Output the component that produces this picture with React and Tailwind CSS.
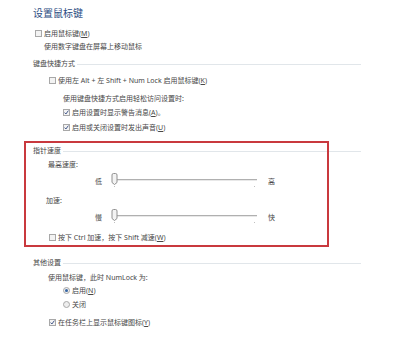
import React from "react";

const font = "font-['Noto_Sans','Noto_Sans_CJK_SC',sans-serif]";

function Box({ checked }) {
  return (
    <span className="relative inline-block w-[7px] h-[7px] border border-[#a8a8a8] bg-[#f3f3f3] shrink-0">
      {checked && (
        <svg className="absolute left-0 top-0" width="5" height="5" viewBox="0 0 5 5">
          <path d="M0.6 2.6 L1.9 4 L4.4 0.6" fill="none" stroke="#44598a" strokeWidth="1" />
        </svg>
      )}
    </span>
  );
}

function Radio({ checked }) {
  return (
    <span className="relative inline-flex items-center justify-center w-[7px] h-[7px] rounded-full border border-[#a8a8a8] bg-[#eeeeee] shrink-0">
      {checked && <span className="w-[3px] h-[3px] rounded-full bg-[#3565a3]" />}
    </span>
  );
}

function Key({ k }) {
  return (
    <>
      (<span className="underline">{k}</span>)
    </>
  );
}

function Section({ label, mt }) {
  return (
    <div className={`flex items-center h-[12px] ml-[33px] w-[328px] ${mt}`}>
      <span className="whitespace-nowrap">{label}</span>
      <span className="flex-1 h-px bg-[#e1e6ea] ml-[2px] mt-[2px]" />
    </div>
  );
}

function Slider({ lo, hi, mt }) {
  return (
    <div className={`flex items-center h-[12px] ${mt}`}>
      <span className="ml-[95px] w-[16px]">{lo}</span>
      <svg width="152" height="16" viewBox="0 0 152 16" className="shrink-0">
        <line x1="6" y1="6.5" x2="146" y2="6.5" stroke="#b0b0b0" strokeWidth="1" />
        <line x1="6" y1="7.5" x2="146" y2="7.5" stroke="#e8e8e8" strokeWidth="1" />
        <rect x="3" y="13" width="1" height="1" fill="#c0c0c0" />
        <rect x="143" y="13" width="1" height="1" fill="#c0c0c0" />
        <path d="M1 2 Q1 0.5 2.5 0.5 L4.5 0.5 Q6 0.5 6 2 L6 9.5 L3.5 11.5 L1 9.5 Z" fill="#f3f3f3" stroke="#909090" strokeWidth="1" />
      </svg>
      <span className="ml-[5px]">{hi}</span>
    </div>
  );
}

export default function App() {
  return (
    <div className={`relative w-[400px] h-[348px] bg-white overflow-hidden text-[7px] leading-none text-[#474747] ${font}`}>
      <div className="flex items-center h-[16px] mt-[5px] ml-[33px] text-[10px] text-[#2c4c82]">设置鼠标键</div>

      <div className="flex items-center h-[12px] mt-[6px] ml-[35px] gap-[2px]">
        <Box /> <span>启用鼠标键<Key k="M" /></span>
      </div>
      <div className="flex items-center h-[12px] mt-[1px] ml-[44px]">使用数字键盘在屏幕上移动鼠标</div>

      <Section label="键盘快捷方式" mt="mt-[5px]" />
      <div className="flex items-center h-[12px] mt-[5px] ml-[49px] gap-[2px]">
        <Box /> <span>使用左 Alt + 左 Shift + Num Lock 启用鼠标键<Key k="K" /></span>
      </div>
      <div className="flex items-center h-[12px] mt-[6px] ml-[63px]">使用键盘快捷方式启用轻松访问设置时:</div>
      <div className="flex items-center h-[12px] mt-[2px] ml-[63px] gap-[2px]">
        <Box checked /> <span>启用设置时显示警告消息<Key k="A" />。</span>
      </div>
      <div className="flex items-center h-[12px] mt-[3px] ml-[63px] gap-[2px]">
        <Box checked /> <span>启用或关闭设置时发出声音<Key k="U" /></span>
      </div>

      <Section label="指针速度" mt="mt-[11px]" />
      <div className="flex items-center h-[12px] mt-[2px] ml-[48px]">最高速度:</div>
      <Slider lo="低" hi="高" mt="mt-[5px]" />
      <div className="flex items-center h-[12px] mt-[7px] ml-[46px]">加速:</div>
      <Slider lo="慢" hi="快" mt="mt-[5px]" />
      <div className="flex items-center h-[12px] mt-[8px] ml-[49px] gap-[2px]">
        <Box /> <span>按下 Ctrl 加速，按下 Shift 减速<Key k="W" /></span>
      </div>

      <Section label="其他设置" mt="mt-[13px]" />
      <div className="flex items-center h-[12px] mt-[3px] ml-[48px]">使用鼠标键，此时 NumLock 为:</div>
      <div className="flex items-center h-[12px] mt-[1px] ml-[63px] gap-[2px]">
        <Radio checked /> <span>启用<Key k="N" /></span>
      </div>
      <div className="flex items-center h-[12px] mt-[2px] ml-[63px] gap-[2px]">
        <Radio /> <span>关闭</span>
      </div>
      <div className="flex items-center h-[12px] mt-[6px] ml-[49px] gap-[2px]">
        <Box checked /> <span>在任务栏上显示鼠标键图标<Key k="Y" /></span>
      </div>

      <div className="absolute left-[24px] top-[141px] w-[305px] h-[106px] border-2 border-[#c9393e]" />
    </div>
  );
}
